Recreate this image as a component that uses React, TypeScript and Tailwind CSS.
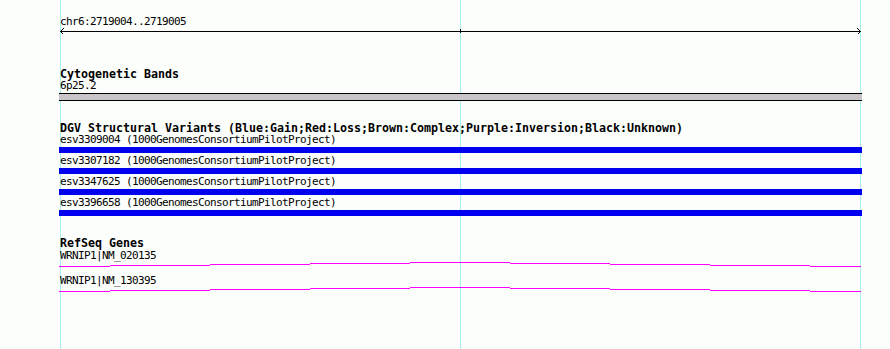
import React from "react"

const variants = ["esv3309004", "esv3307182", "esv3347625", "esv3396658"]

const genes = ["WRNIP1|NM_020135", "WRNIP1|NM_130395"]

// step offsets of the gene line (x ranges are relative to the track start at 59)
const geneSteps: [number, number, number][] = [
  [0, 51, 4],
  [51, 151, 3],
  [151, 251, 2],
  [251, 351, 1],
  [351, 451, 0],
  [451, 551, 1],
  [551, 651, 2],
  [651, 751, 3],
  [751, 802, 4],
]

function Label({ children }: { children: React.ReactNode }) {
  return <div className="h-[13px] pt-px pl-px text-[11px] tracking-[-0.62px] leading-[12px] whitespace-pre">{children}</div>
}

function Header({ children }: { children: React.ReactNode }) {
  return <div className="h-[13px] pt-[3px] pl-px text-[11.63px] font-bold leading-[10px] whitespace-pre">{children}</div>
}

function Axis() {
  return (
    <svg width="803" height="7" className="block" shapeRendering="crispEdges">
      <rect x="1" y="3" width="801" height="1" fill="#000" />
      <path d="M1.5 3.5 L4.5 0.5 M1.5 3.5 L4.5 6.5" stroke="#000" strokeWidth="1" fill="none" />
      <path d="M801.5 3.5 L798.5 0.5 M801.5 3.5 L798.5 6.5" stroke="#000" strokeWidth="1" fill="none" />
      <rect x="401" y="1" width="1" height="4" fill="#000" />
    </svg>
  )
}

function GeneLine() {
  return (
    <svg width="803" height="5" className="block" shapeRendering="crispEdges">
      {geneSteps.map(([a, b, y], i) => (
        <rect key={i} x={a} y={y} width={b - a} height="1" fill="#ff00ff" />
      ))}
    </svg>
  )
}

export default function App() {
  return (
    <div className="relative w-[890px] h-[349px] overflow-hidden bg-[#fcfefc] text-black font-['DejaVu_Sans_Mono','Liberation_Mono',monospace]">
      {/* guide lines */}
      <div className="absolute top-0 bottom-0 left-[60px] w-px bg-[#a8eef0]"></div>
      <div className="absolute top-0 bottom-0 left-[460px] w-px bg-[#a8eef0]"></div>
      <div className="absolute top-0 bottom-0 left-[860px] w-px bg-[#a8eef0]"></div>

      <div className="relative ml-[59px] w-[803px] pt-[15px]">
        <Label>chr6:2719004..2719005</Label>
        <Axis />

        <div className="mt-[31px]">
          <Header>Cytogenetic Bands</Header>
          <Label>6p25.2</Label>
          <div className="mt-px h-[8px] border-y border-black bg-[#c8c5c8]"></div>
        </div>

        <div className="mt-[19px]">
          <Header>DGV Structural Variants (Blue:Gain;Red:Loss;Brown:Complex;Purple:Inversion;Black:Unknown)</Header>
          {variants.map((v) => (
            <div key={v} className="mb-px">
              <Label>{v} (1000GenomesConsortiumPilotProject)</Label>
              <div className="mt-px h-[6px] bg-[#0000ee]"></div>
            </div>
          ))}
        </div>

        <div className="mt-[19px]">
          <Header>RefSeq Genes</Header>
          <div className="mt-px">
            <Label>{genes[0]}</Label>
            <GeneLine />
          </div>
          <div className="mt-[7px]">
            <Label>{genes[1]}</Label>
            <GeneLine />
          </div>
        </div>
      </div>
    </div>
  )
}
